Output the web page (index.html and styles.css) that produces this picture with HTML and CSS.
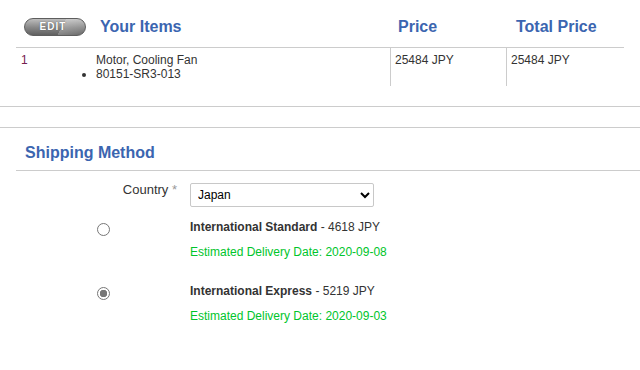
FILE: index.html
```html
<!DOCTYPE html>
<html lang="en">

<head>
    <meta charset="UTF-8">
    <meta name="viewport" content="width=device-width, initial-scale=1.0">
    <title>Checkout</title>
    <link rel="stylesheet" href="styles.css">
</head>

<body>
    <div class="items">
        <div class="items-row items-head">
            <div class="cell cell-num"><button class="edit-btn">EDIT</button></div>
            <div class="cell cell-name">Your Items</div>
            <div class="cell cell-price">Price</div>
            <div class="cell cell-total">Total Price</div>
        </div>
        <div class="items-row items-body">
            <div class="cell cell-num">1</div>
            <div class="cell cell-name">
                Motor, Cooling Fan
                <ul class="part-list">
                    <li>80151-SR3-013</li>
                </ul>
            </div>
            <div class="cell cell-price">25484 JPY</div>
            <div class="cell cell-total">25484 JPY</div>
        </div>
    </div>

    <div class="spacer"></div>

    <div class="shipping">
        <h2 class="shipping-title">Shipping Method</h2>

        <div class="form-row country-row">
            <label class="form-label" for="country">Country <span class="req">*</span></label>
            <select id="country" class="country-select">
                <option>Japan</option>
            </select>
        </div>

        <div class="form-row option-row">
            <div class="radio-cell"><input type="radio" name="ship" class="radio"></div>
            <div class="option-info">
                <div class="option-name"><b>International Standard</b> - 4618 JPY</div>
                <div class="option-date">Estimated Delivery Date: 2020-09-08</div>
            </div>
        </div>

        <div class="form-row option-row">
            <div class="radio-cell"><input type="radio" name="ship" class="radio" checked></div>
            <div class="option-info">
                <div class="option-name"><b>International Express</b> - 5219 JPY</div>
                <div class="option-date">Estimated Delivery Date: 2020-09-03</div>
            </div>
        </div>
    </div>
</body>

</html>
```

FILE: styles.css
```css
body {
    margin: 0;
    font-family: "Liberation Sans", Arial, sans-serif;
    font-size: 12px;
    color: #333;
    background: #fff;
}

/* Tabla de articulos */
.items {
    margin: 0 16px;
}

.items-row {
    display: grid;
    grid-template-columns: 80px 294px 116px 118px;
}

.items-head {
    border-bottom: 1px solid #ccc;
}

.items-head .cell {
    padding: 15px 0 8px;
    line-height: 24px;
    font-size: 16px;
    font-weight: bold;
    color: #3b65b0;
    display: flex;
    align-items: center;
}

.items-head .cell-num { padding-left: 8px; }
.items-head .cell-name { padding-left: 4px; }
.items-head .cell-price { padding-left: 8px; }
.items-head .cell-total { padding-left: 10px; }

.items-body .cell {
    padding: 5px 0;
    line-height: 14px;
}

.items-body .cell-num {
    padding-left: 5px;
    color: #74204f;
}

.items-body .cell-price,
.items-body .cell-total {
    border-left: 1px solid #ccc;
    padding-left: 4px;
}

.part-list {
    margin: 0;
    padding: 0;
    list-style: disc outside;
}

.edit-btn {
    width: 62px;
    height: 18px;
    margin-top: -1px;
    padding: 0 4px 0 0;
    border: 1px solid #5e5e5e;
    border-radius: 9px;
    background:
        linear-gradient(118deg, transparent 60%, rgba(255, 255, 255, 0.22) 60%, rgba(255, 255, 255, 0.05) 100%),
        linear-gradient(to bottom, #bdbdbd, #8a8a8a 50%, #606060);
    color: #fff;
    font-family: "Liberation Sans", Arial, sans-serif;
    font-size: 10px;
    font-weight: bold;
    letter-spacing: 1px;
    line-height: 16px;
    text-shadow: 0 0 1px #444;
    cursor: pointer;
}

.spacer {
    margin-top: 20px;
    height: 20px;
    border-top: 1px solid #ccc;
    border-bottom: 1px solid #ccc;
}

/* Metodo de envio */
.shipping {
    margin-left: 16px;
}

.shipping-title {
    margin: 0;
    padding: 15px 0 7px 9px;
    line-height: 20px;
    font-size: 16px;
    font-weight: bold;
    color: #3b65b0;
    border-bottom: 1px solid #ccc;
}

.form-row {
    display: grid;
    grid-template-columns: 164px 1fr;
    column-gap: 10px;
    align-items: start;
}

.country-row {
    padding-top: 12px;
}

.form-label {
    text-align: right;
    padding-right: 3px;
    font-size: 13px;
    line-height: 13px;
}

.req {
    color: #999;
}

.country-select {
    width: 184px;
    height: 24px;
    border: 1px solid #c8c8c8;
    border-radius: 2px;
    background: #fff;
    font-family: "Liberation Sans", Arial, sans-serif;
    font-size: 12px;
    color: #000;
    padding: 0 3px;
}

.option-row {
    margin-top: 13px;
}

.option-row + .option-row {
    margin-top: 25px;
}

.radio-cell {
    display: flex;
    justify-content: flex-end;
    padding-right: 70px;
}

.radio {
    appearance: none;
    width: 13px;
    height: 13px;
    margin: 3px 0 0;
    border: 1px solid #777;
    border-radius: 50%;
    background: #fff;
}

.radio:checked {
    background: radial-gradient(circle, #777 0, #777 3.5px, #fff 4px);
}

.option-name {
    line-height: 14px;
}

.option-date {
    margin-top: 11px;
    line-height: 14px;
    color: #00c52b;
}
```
